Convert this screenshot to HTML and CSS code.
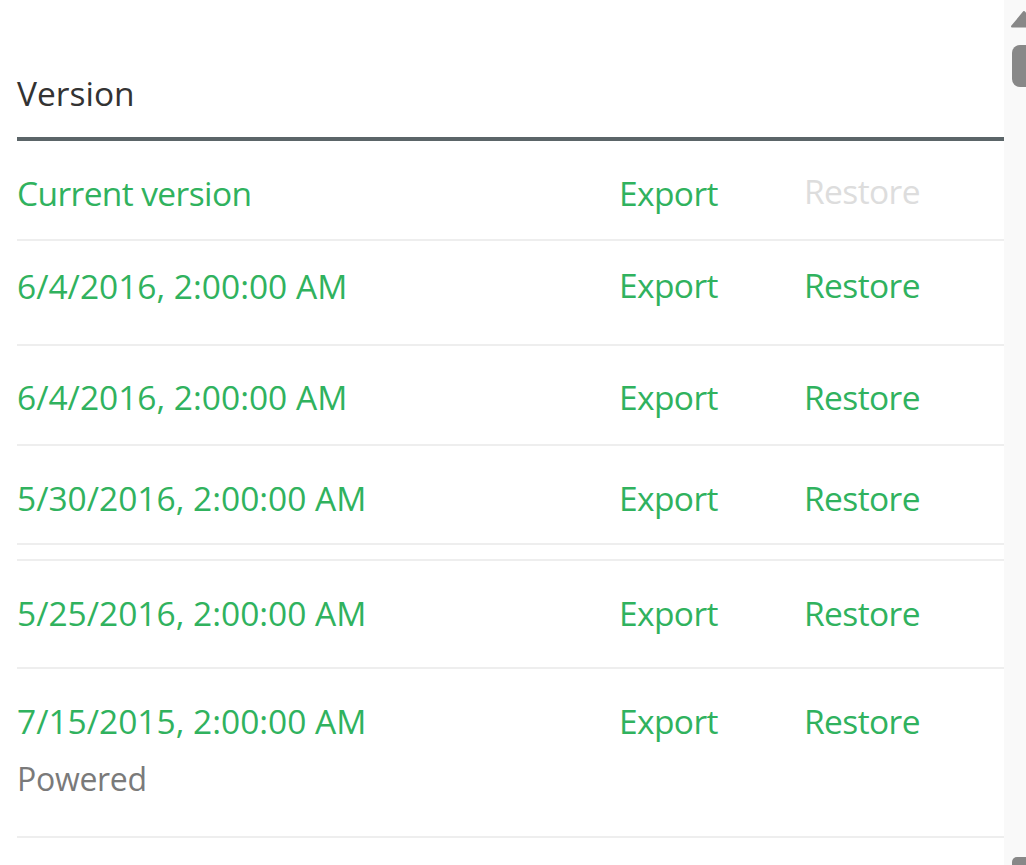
FILE: index.html
```html
<!DOCTYPE html>
<html lang="en">
<head>
<meta charset="utf-8">
<title>Versions</title>
<link rel="stylesheet" href="styles.css">
</head>
<body>
<div class="page">
  <main class="main">
    <div class="head">Version</div>
    <div class="row row-a">
      <div class="date word">Current version</div>
      <div class="act">Export</div>
      <div class="act act-off">Restore</div>
    </div>
    <div class="row row-b">
      <div class="date">6/4/2016, 2:00:00 AM</div>
      <div class="act act-up">Export</div>
      <div class="act act-up">Restore</div>
    </div>
    <div class="row row-c">
      <div class="date">6/4/2016, 2:00:00 AM</div>
      <div class="act">Export</div>
      <div class="act">Restore</div>
    </div>
    <div class="row row-d">
      <div class="date">5/30/2016, 2:00:00 AM</div>
      <div class="act">Export</div>
      <div class="act">Restore</div>
    </div>
    <div class="row row-empty"></div>
    <div class="row row-e">
      <div class="date">5/25/2016, 2:00:00 AM</div>
      <div class="act">Export</div>
      <div class="act">Restore</div>
    </div>
    <div class="row row-f">
      <div class="date">7/15/2015, 2:00:00 AM<div class="powered">Powered</div></div>
      <div class="act">Export</div>
      <div class="act">Restore</div>
    </div>
  </main>
  <aside class="scrollbar">
    <svg class="arrow" width="22" height="18" viewBox="0 0 22 18"><path d="M8 16.5 L20 2 L32 16.5 Z" fill="#888888" stroke="#888888" stroke-width="2" stroke-linejoin="round"/></svg>
    <div class="thumb"></div>
    <div class="spacer"></div>
    <div class="down"></div>
  </aside>
</div>
</body>
</html>
```
FILE: styles.css
```css
html, body {
  margin: 0;
  padding: 0;
  background: #ffffff;
}
body {
  font-family: "Open Sans", "Noto Sans", "Liberation Sans", sans-serif;
  font-size: 33.5px;
  line-height: 48px;
}
.page {
  display: flex;
  height: 865px;
  overflow: hidden;
}
.main {
  flex: 1;
  padding-left: 17px;
}
.head {
  color: #333333;
  padding-top: 69px;
  padding-bottom: 20px;
  border-bottom: 4px solid #5b6568;
}
.row {
  display: grid;
  grid-template-columns: 602px 185px 1fr;
  align-items: start;
  border-bottom: 2px solid #eeeeee;
  color: #30b25e;
  box-sizing: border-box;
}
.row-a { padding-top: 28px; height: 100px; }
.row-b { padding-top: 21px; height: 105px; }
.row-c { padding-top: 27px; height: 100px; }
.row-d { padding-top: 28px; height: 99px; }
.row-empty { height: 16px; }
.row-e { padding-top: 28px; height: 108px; }
.row-f { padding-top: 28px; height: 169px; }
.word,
.act {
  letter-spacing: -0.6px;
}
.act-off {
  color: #dddddd;
  margin-top: -2px;
}
.act-up {
  margin-top: -1px;
}
.powered {
  color: #7a7a7a;
  font-size: 32px;
  letter-spacing: -0.3px;
  margin-top: 10px;
}
.scrollbar {
  width: 22px;
  background: #f9f9f9;
  display: flex;
  flex-direction: column;
  padding-top: 10px;
  overflow: hidden;
}
.arrow {
  display: block;
  flex: none;
}
.thumb {
  flex: none;
  margin-top: 17px;
  margin-left: 8px;
  height: 42px;
  background: #888888;
  border-radius: 8px 0 0 8px;
}
.spacer { flex: 1; }
.down {
  flex: none;
  margin-left: 8px;
  height: 8px;
  background: #888888;
  border-radius: 5px 0 0 0;
}
```
